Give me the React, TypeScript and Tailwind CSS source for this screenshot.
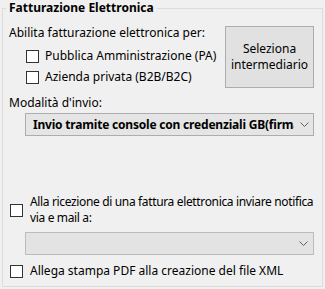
import React from 'react';

const font = { fontFamily: '"Noto Sans", "Open Sans", sans-serif' };

function Box() {
  return <span className="block w-[13px] h-[13px] shrink-0 border border-[#333333] bg-white" />;
}

function Chevron() {
  return (
    <svg width="9" height="5" viewBox="0 0 9 5" className="shrink-0">
      <polyline points="0.5,0.5 4.5,4.5 8.5,0.5" fill="none" stroke="#606060" strokeWidth="1" />
    </svg>
  );
}

export default function App() {
  return (
    <div className="w-[325px] h-[289px] bg-[#f0f0f0] text-[12px] leading-[16px] text-black" style={font}>
      <fieldset className="ml-[2px] w-[321px] h-[287px] border border-[#dcdcdc]">
        <legend className="ml-[3px] px-[3px] font-bold leading-[16px]">Fatturazione Elettronica</legend>

        {/* Top section */}
        <div className="flex h-[72px] pt-[9px]">
          <div className="flex-1 pl-[6px]">
            <div className="h-[16px]">Abilita fatturazione elettronica per:</div>
            <label className="flex items-center gap-[6px] h-[16px] mt-[7px] ml-[17px]">
              <Box />
              <span className="whitespace-nowrap">Pubblica Amministrazione (PA)</span>
            </label>
            <label className="flex items-center gap-[6px] h-[16px] mt-[5px] ml-[17px]">
              <Box />
              <span className="whitespace-nowrap">Azienda privata (B2B/B2C)</span>
            </label>
          </div>
          <button className="mt-[1px] mr-[8px] w-[89px] h-[62px] bg-[#e1e1e1] border border-[#adadad] leading-[16px] text-center">
            Seleziona
            <br />
            intermediario
          </button>
        </div>

        {/* Modalità */}
        <div className="mt-[7px] pl-[6px] h-[16px]">Modalità d'invio:</div>
        <div className="mt-[2px] ml-[22px] w-[289px] h-[23px] flex items-center bg-[#e5e5e5] border border-[#adadad] pl-[7px]">
          <span className="w-[261px] overflow-hidden whitespace-nowrap font-bold tracking-[-0.2px]">
            Invio tramite console con credenziali GB(firma a carico di GB)
          </span>
          <span className="ml-[6px]">
            <Chevron />
          </span>
        </div>

        {/* Notifica */}
        <label className="mt-[58px] ml-[7px] flex items-center gap-[7px]">
          <Box />
          <span className="leading-[16px] whitespace-nowrap tracking-[-0.35px]">
            Alla ricezione di una fattura elettronica inviare notifica
            <br />
            via e mail a:
          </span>
        </label>
        <div className="mt-[6px] ml-[22px] w-[289px] h-[23px] flex items-center justify-end bg-[#e3e3e3] border border-[#bcbcbc] pr-[5px]">
          <Chevron />
        </div>
        <label className="mt-[8px] ml-[7px] flex items-center gap-[7px] h-[16px]">
          <Box />
          <span className="whitespace-nowrap">Allega stampa PDF alla creazione del file XML</span>
        </label>
      </fieldset>
    </div>
  );
}
